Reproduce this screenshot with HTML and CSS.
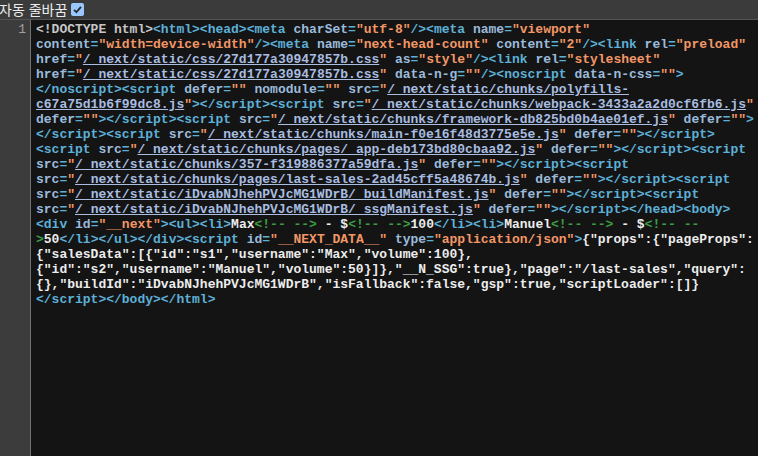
FILE: index.html
```html
<!DOCTYPE html>
<html lang="ko">

<head>
    <meta charset="UTF-8">
    <meta name="viewport" content="width=device-width, initial-scale=1.0">
    <title>view-source</title>
    <link rel="stylesheet" href="styles.css">
</head>

<body>
    <div class="wrap-bar">
        <label class="wrap-label">자동 줄바꿈 <span class="check"><svg width="11" height="11" viewBox="0 0 11 11"><path d="M2 5.8 L4.4 8.2 L9 2.8" fill="none" stroke="#2b2b2b" stroke-width="1.8"/></svg></span></label>
    </div>
    <div class="source">
        <div class="gutter">1</div>
        <div class="code">
            <div class="line"><span class="d">&lt;!DOCTYPE html&gt;</span><span class="t">&lt;html&gt;&lt;head&gt;&lt;meta </span><span class="an">charSet</span><span class="t">=</span><span class="av">"utf-8"</span><span class="t">/&gt;&lt;meta </span><span class="an">name</span><span class="t">=</span><span class="av">"viewport"</span></div>
            <div class="line"><span class="an">content</span><span class="t">=</span><span class="av">"width=device-width"</span><span class="t">/&gt;&lt;meta </span><span class="an">name</span><span class="t">=</span><span class="av">"next-head-count"</span> <span class="an">content</span><span class="t">=</span><span class="av">"2"</span><span class="t">/&gt;&lt;link </span><span class="an">rel</span><span class="t">=</span><span class="av">"preload"</span></div>
            <div class="line"><span class="an">href</span><span class="t">=</span><span class="av">"</span><a class="ln">/_next/static/css/27d177a30947857b.css</a><span class="av">"</span> <span class="an">as</span><span class="t">=</span><span class="av">"style"</span><span class="t">/&gt;&lt;link </span><span class="an">rel</span><span class="t">=</span><span class="av">"stylesheet"</span></div>
            <div class="line"><span class="an">href</span><span class="t">=</span><span class="av">"</span><a class="ln">/_next/static/css/27d177a30947857b.css</a><span class="av">"</span> <span class="an">data-n-g</span><span class="t">=</span><span class="av">""</span><span class="t">/&gt;&lt;noscript </span><span class="an">data-n-css</span><span class="t">=</span><span class="av">""</span><span class="t">&gt;</span></div>
            <div class="line"><span class="t">&lt;/noscript&gt;&lt;script </span><span class="an">defer</span><span class="t">=</span><span class="av">""</span> <span class="an">nomodule</span><span class="t">=</span><span class="av">""</span> <span class="an">src</span><span class="t">=</span><span class="av">"</span><a class="ln">/_next/static/chunks/polyfills-</a></div>
            <div class="line"><a class="ln">c67a75d1b6f99dc8.js</a><span class="av">"</span><span class="t">&gt;&lt;/script&gt;&lt;script </span><span class="an">src</span><span class="t">=</span><span class="av">"</span><a class="ln">/_next/static/chunks/webpack-3433a2a2d0cf6fb6.js</a><span class="av">"</span></div>
            <div class="line"><span class="an">defer</span><span class="t">=</span><span class="av">""</span><span class="t">&gt;&lt;/script&gt;&lt;script </span><span class="an">src</span><span class="t">=</span><span class="av">"</span><a class="ln">/_next/static/chunks/framework-db825bd0b4ae01ef.js</a><span class="av">"</span> <span class="an">defer</span><span class="t">=</span><span class="av">""</span><span class="t">&gt;</span></div>
            <div class="line"><span class="t">&lt;/script&gt;&lt;script </span><span class="an">src</span><span class="t">=</span><span class="av">"</span><a class="ln">/_next/static/chunks/main-f0e16f48d3775e5e.js</a><span class="av">"</span> <span class="an">defer</span><span class="t">=</span><span class="av">""</span><span class="t">&gt;&lt;/script&gt;</span></div>
            <div class="line"><span class="t">&lt;script </span><span class="an">src</span><span class="t">=</span><span class="av">"</span><a class="ln">/_next/static/chunks/pages/_app-deb173bd80cbaa92.js</a><span class="av">"</span> <span class="an">defer</span><span class="t">=</span><span class="av">""</span><span class="t">&gt;&lt;/script&gt;&lt;script</span></div>
            <div class="line"><span class="an">src</span><span class="t">=</span><span class="av">"</span><a class="ln">/_next/static/chunks/357-f319886377a59dfa.js</a><span class="av">"</span> <span class="an">defer</span><span class="t">=</span><span class="av">""</span><span class="t">&gt;&lt;/script&gt;&lt;script</span></div>
            <div class="line"><span class="an">src</span><span class="t">=</span><span class="av">"</span><a class="ln">/_next/static/chunks/pages/last-sales-2ad45cff5a48674b.js</a><span class="av">"</span> <span class="an">defer</span><span class="t">=</span><span class="av">""</span><span class="t">&gt;&lt;/script&gt;&lt;script</span></div>
            <div class="line"><span class="an">src</span><span class="t">=</span><span class="av">"</span><a class="ln">/_next/static/iDvabNJhehPVJcMG1WDrB/_buildManifest.js</a><span class="av">"</span> <span class="an">defer</span><span class="t">=</span><span class="av">""</span><span class="t">&gt;&lt;/script&gt;&lt;script</span></div>
            <div class="line"><span class="an">src</span><span class="t">=</span><span class="av">"</span><a class="ln">/_next/static/iDvabNJhehPVJcMG1WDrB/_ssgManifest.js</a><span class="av">"</span> <span class="an">defer</span><span class="t">=</span><span class="av">""</span><span class="t">&gt;&lt;/script&gt;&lt;/head&gt;&lt;body&gt;</span></div>
            <div class="line"><span class="t">&lt;div </span><span class="an">id</span><span class="t">=</span><span class="av">"__next"</span><span class="t">&gt;&lt;ul&gt;&lt;li&gt;</span><span class="tx">Max</span><span class="c">&lt;!-- --&gt;</span><span class="tx"> - $</span><span class="c">&lt;!-- --&gt;</span><span class="tx">100</span><span class="t">&lt;/li&gt;&lt;li&gt;</span><span class="tx">Manuel</span><span class="c">&lt;!-- --&gt;</span><span class="tx"> - $</span><span class="c">&lt;!-- --</span></div>
            <div class="line"><span class="c">&gt;</span><span class="tx">50</span><span class="t">&lt;/li&gt;&lt;/ul&gt;&lt;/div&gt;&lt;script </span><span class="an">id</span><span class="t">=</span><span class="av">"__NEXT_DATA__"</span> <span class="an">type</span><span class="t">=</span><span class="av">"application/json"</span><span class="t">&gt;</span><span class="tx">{"props":{"pageProps":</span></div>
            <div class="line"><span class="tx">{"salesData":[{"id":"s1","username":"Max","volume":100},</span></div>
            <div class="line"><span class="tx">{"id":"s2","username":"Manuel","volume":50}]},"__N_SSG":true},"page":"/last-sales","query":</span></div>
            <div class="line"><span class="tx">{},"buildId":"iDvabNJhehPVJcMG1WDrB","isFallback":false,"gsp":true,"scriptLoader":[]}</span></div>
            <div class="line"><span class="t">&lt;/script&gt;&lt;/body&gt;&lt;/html&gt;</span></div>
        </div>
    </div>
</body>

</html>
```

FILE: styles.css
```css
html, body {
    margin: 0;
    height: 100%;
    background: #141414;
}

body {
    display: flex;
    flex-direction: column;
}

.wrap-bar {
    height: 19px;
    background: #3b3b3b;
    border-bottom: 1px solid #545454;
    display: flex;
    align-items: center;
}

.wrap-label {
    font-family: "Noto Sans CJK KR", "Noto Sans", sans-serif;
    font-size: 14px;
    color: #ececec;
    display: flex;
    align-items: center;
    gap: 4px;
    line-height: 19px;
    margin-left: -1px;
}

.check {
    width: 13px;
    height: 13px;
    border-radius: 2px;
    background: #99c8ff;
    display: flex;
    align-items: center;
    justify-content: center;
}

.source {
    flex: 1;
    display: flex;
}

.gutter {
    width: 26px;
    padding-right: 4px;
    padding-top: 2px;
    background: #3c3c3c;
    border-right: 1px solid #727272;
    text-align: right;
    font-family: "Liberation Mono", monospace;
    font-size: 13px;
    line-height: 15px;
    color: #a0a0a0;
}

.code {
    padding: 2px 0 0 5px;
    font-family: "Liberation Mono", monospace;
    font-size: 13px;
    line-height: 15px;
    font-weight: bold;
    color: #e8e8e8;
}

.line {
    white-space: pre;
}

.d {
    color: #c6c6c6;
}

.t {
    color: #5db0d7;
}

.an {
    color: #9bbbdc;
}

.av {
    color: #f29766;
}

.ln {
    color: #a8bde0;
    text-decoration: underline;
}

.c {
    color: #3b9e43;
}

.tx {
    color: #ededed;
}
```
